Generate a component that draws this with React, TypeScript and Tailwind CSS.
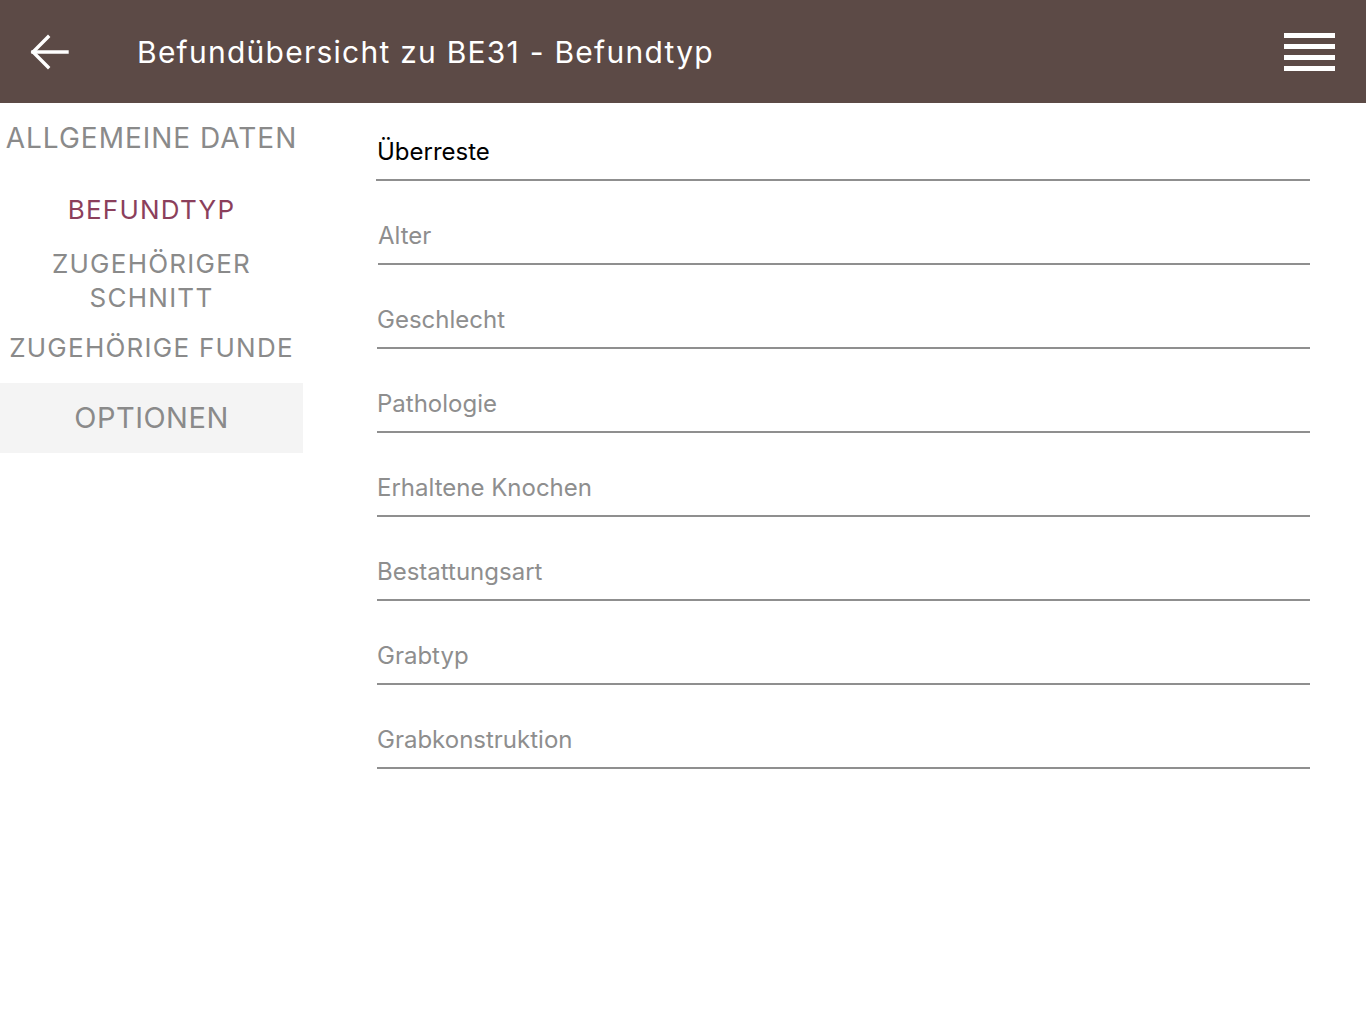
import React from "react";

const fields = [
  "Alter",
  "Geschlecht",
  "Pathologie",
  "Erhaltene Knochen",
  "Bestattungsart",
  "Grabtyp",
  "Grabkonstruktion",
];

export default function App() {
  return (
    <div className="w-[1366px] h-[1024px] bg-white overflow-hidden" style={{ fontFamily: "Inter, 'Noto Sans', sans-serif" }}>
      <header className="h-[103px] bg-[#5c4a46] flex items-center">
        <div className="w-[137px] flex items-center pl-[29px]">
          <svg width="40" height="38" viewBox="0 0 40 38" fill="none" stroke="white" strokeWidth="3.4" strokeLinecap="square">
            <path d="M38 19H4" />
            <path d="M19 4L4 19L19 34" />
          </svg>
        </div>
        <h1 className="text-white text-[30px] leading-none tracking-[1.25px]">Befundübersicht zu BE31 - Befundtyp</h1>
        <div className="ml-auto mr-[31px] flex flex-col gap-[6px]">
          <div className="w-[51px] h-[5px] bg-white" />
          <div className="w-[51px] h-[5px] bg-white" />
          <div className="w-[51px] h-[5px] bg-white" />
          <div className="w-[51px] h-[5px] bg-white" />
        </div>
      </header>
      <div className="flex">
        <nav className="w-[303px] flex flex-col text-center text-[#8a8a8a]">
          <div className="mt-[17px] text-[28px] leading-[36px] tracking-[1px] whitespace-nowrap">ALLGEMEINE DATEN</div>
          <div className="mt-[37px] text-[26px] leading-[34px] tracking-[1.25px] text-[#8b3f5c]">BEFUNDTYP</div>
          <div className="mt-[20px] text-[26px] leading-[34px] tracking-[1.25px]">ZUGEHÖRIGER<br />SCHNITT</div>
          <div className="mt-[16px] text-[26px] leading-[34px] tracking-[1.25px] whitespace-nowrap">ZUGEHÖRIGE FUNDE</div>
          <div className="mt-[18px] h-[70px] bg-[#f4f4f4] flex items-center justify-center text-[29px] tracking-[0.5px]">OPTIONEN</div>
        </nav>
        <main className="ml-[73px] w-[934px] pt-[35px] flex flex-col gap-[41px]">
          <div>
            <div className="text-[24px] leading-[28px] text-black pl-[1px]">Überreste</div>
            <div className="mt-[13px] h-[2px] bg-[#8f8f8f]" />
          </div>
          {fields.map((f, i) => (
            <div key={f} className={i === 0 ? "pl-[2px]" : "pl-[1px]"}>
              <div className="text-[24px] leading-[28px] text-[#8e8e8e]">{f}</div>
              <div className="mt-[13px] h-[2px] bg-[#8f8f8f]" />
            </div>
          ))}
        </main>
      </div>
    </div>
  );
}
